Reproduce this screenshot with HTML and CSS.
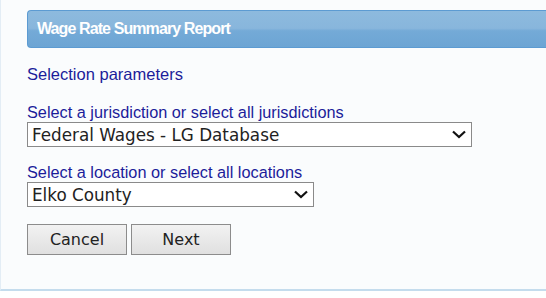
FILE: index.html
```html
<!DOCTYPE html>
<html lang="en">
<head>
    <meta charset="UTF-8">
    <title>Wage Rate Summary Report</title>
    <link rel="stylesheet" href="styles.css">
</head>
<body>
    <div class="panel">
        <div class="panel-header">Wage Rate Summary Report</div>
        <div class="panel-body">
            <p class="section-title">Selection parameters</p>
            <div class="field">
                <label for="jurisdiction">Select a jurisdiction or select all jurisdictions</label>
                <div class="select-box wide">
                    <select id="jurisdiction">
                        <option>Federal Wages - LG Database</option>
                    </select>
                    <svg class="chevron" width="14" height="9" viewBox="0 0 14 9"><path d="M1 1.5 L7 7 L13 1.5" fill="none" stroke="#111" stroke-width="2.2"/></svg>
                </div>
            </div>
            <div class="field">
                <label for="location">Select a location or select all locations</label>
                <div class="select-box narrow">
                    <select id="location">
                        <option>Elko County</option>
                    </select>
                    <svg class="chevron" width="14" height="9" viewBox="0 0 14 9"><path d="M1 1.5 L7 7 L13 1.5" fill="none" stroke="#111" stroke-width="2.2"/></svg>
                </div>
            </div>
            <div class="buttons">
                <button class="btn">Cancel</button>
                <button class="btn">Next</button>
            </div>
        </div>
    </div>
</body>
</html>
```

FILE: styles.css
```css
body {
    margin: 0;
    background-color: #fff;
    font-family: "Liberation Sans", Arial, sans-serif;
}

.panel {
    height: 291px;
    box-sizing: border-box;
    background-color: #fafcfd;
    border-left: 1px solid #e3edf5;
    border-bottom: 2px solid #c4dced;
    padding: 10px 0 0 26px;
}

.panel-header {
    height: 38px;
    box-sizing: border-box;
    border: 1px solid #5c9bd2;
    border-right: none;
    border-radius: 4px 0 0 4px;
    background: linear-gradient(to bottom, #8dbade 0%, #88b6dc 48%, #74aad7 55%, #6ca5d4 100%);
    color: #fff;
    font-weight: bold;
    font-size: 16px;
    letter-spacing: -0.9px;
    line-height: 36px;
    padding-left: 9px;
}

.panel-body {
    padding-top: 17px;
}

.section-title {
    margin: 0 0 20px;
    color: #1c1c9a;
    font-size: 16.5px;
    line-height: 18px;
}

.field {
    margin-bottom: 16px;
}

.field + .field {
    margin-bottom: 17px;
}

.field label {
    display: block;
    color: #1c1c9a;
    font-size: 16.3px;
    line-height: 18px;
    margin-bottom: 1px;
}

.select-box {
    position: relative;
    height: 25px;
    box-sizing: border-box;
    border: 1px solid #8a8a8a;
    background-color: #fff;
}

.select-box.wide {
    width: 445px;
}

.select-box.narrow {
    width: 287px;
}

.select-box select {
    appearance: none;
    border: none;
    background: transparent;
    width: 100%;
    height: 100%;
    padding: 0 0 0 4px;
    font-family: "DejaVu Sans", sans-serif;
    font-size: 16.8px;
    color: #222;
    outline: none;
}

.chevron {
    position: absolute;
    right: 5px;
    top: 7px;
    pointer-events: none;
}

.buttons {
    display: flex;
    gap: 4px;
}

.btn {
    width: 100px;
    height: 31px;
    border: 1px solid #8c8c8c;
    background: linear-gradient(to bottom, #f2f2f2, #e0e0e0);
    font-family: "DejaVu Sans", sans-serif;
    font-size: 16px;
    color: #222;
    padding: 0;
}
```
